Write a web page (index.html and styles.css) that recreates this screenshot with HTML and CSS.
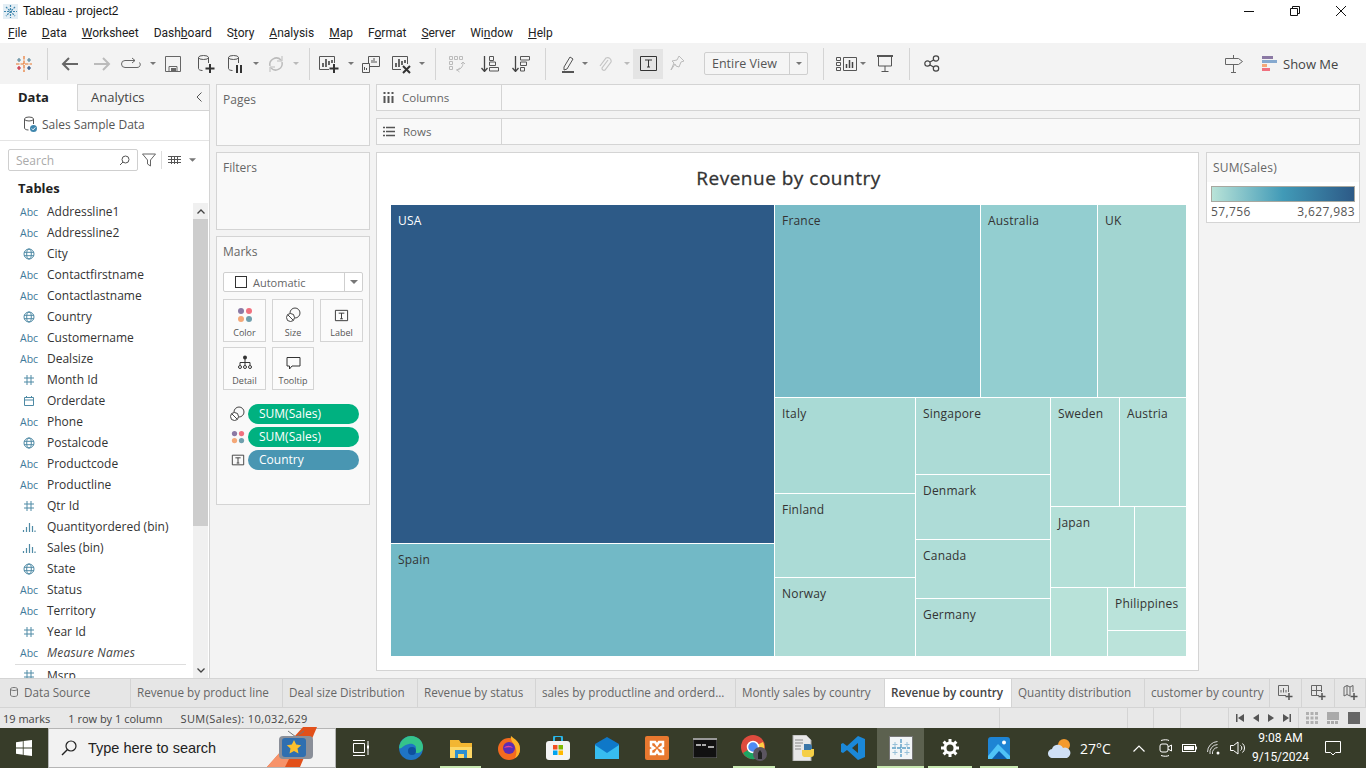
FILE: index.html
```html
<!DOCTYPE html>
<html lang="en">
<head>
  <meta charset="UTF-8" />
  <meta name="viewport" content="width=device-width, initial-scale=1.0" />
  <title>Tableau - project2</title>
  <link rel="stylesheet" href="styles.css">
</head>
<body>

  <svg class="defs" width="0" height="0">
    <symbol id="i-globe" viewBox="0 0 12 12"><g fill="none" stroke="#4f8aa5" stroke-width="1"><circle cx="6" cy="6" r="5"/><ellipse cx="6" cy="6" rx="2.3" ry="5"/><path d="M1 4.3h10M1 7.7h10"/></g></symbol>
    <symbol id="i-hash" viewBox="0 0 12 12"><path d="M4 1v10M8 1v10M1 4h10M1 8h10" fill="none" stroke="#4f8aa5" stroke-width="1"/></symbol>
    <symbol id="i-cal" viewBox="0 0 12 12"><path d="M1.500 2.500h9v8h-9zM1.500 5h9M3.500 1v2M8.500 1v2" fill="none" stroke="#4f8aa5" stroke-width="1"/></symbol>
    <symbol id="i-bin" viewBox="0 0 14 12"><path d="M1.500 9v2M4.500 6v5M7.500 2v9M10.500 5v6M13 9.500v1.500" fill="none" stroke="#4f8aa5" stroke-width="1.200"/></symbol>
    <symbol id="i-size" viewBox="0 0 16 16"><g fill="none" stroke="#444" stroke-width="1"><circle cx="10" cy="6" r="5"/><circle cx="5.500" cy="10.500" r="4" fill="#fff"/><path d="M3 8l5 5"/></g></symbol>
    <symbol id="i-color" viewBox="0 0 16 16"><circle cx="4" cy="4" r="3" fill="#8b79a4"/><circle cx="12" cy="4" r="3" fill="#f0717f"/><circle cx="4" cy="12" r="3" fill="#f4a878"/><circle cx="12" cy="12" r="3" fill="#6f9fad"/></symbol>
    <symbol id="i-label" viewBox="0 0 16 16"><path d="M1.500 2.500h13v11h-13z" fill="none" stroke="#333"/><path d="M5 5.500h6M8 5.500v6M6.500 11.500h3" fill="none" stroke="#333"/></symbol>
    <symbol id="i-caret" viewBox="0 0 8 4"><path d="M0 0h8L4 4z" fill="#777"/></symbol>
  </svg>

  <div class="app">

    <header class="titlebar">
      <svg class="app-icon" width="15" height="15" viewBox="0 0 15 15"><rect width="15" height="15" fill="#e3eef5"/><path d="M7.500 1v13M1 7.500h13M3 3l9 9M12 3l-9 9" stroke="#3f86ad" stroke-width="1.200" stroke-dasharray="2 1"/></svg>
      <span class="app-title">Tableau - project2</span>
      <div class="win-controls">
        <svg width="12" height="12" viewBox="0 0 12 12"><path d="M1 6.500h10" stroke="#111"/></svg>
        <svg width="12" height="12" viewBox="0 0 12 12"><path d="M1.500 3.500h7v7h-7zM3.500 3.500v-2h7v7h-2" fill="none" stroke="#111"/></svg>
        <svg width="12" height="12" viewBox="0 0 12 12"><path d="M1 1l10 10M11 1L1 11" stroke="#111"/></svg>
      </div>
    </header>

    <nav class="menubar">
      <span><u>F</u>ile</span>
      <span><u>D</u>ata</span>
      <span><u>W</u>orksheet</span>
      <span>Dash<u>b</u>oard</span>
      <span>S<u>t</u>ory</span>
      <span><u>A</u>nalysis</span>
      <span><u>M</u>ap</span>
      <span>F<u>o</u>rmat</span>
      <span><u>S</u>erver</span>
      <span>Wi<u>n</u>dow</span>
      <span><u>H</u>elp</span>
    </nav>

    <div class="toolbar">
      <svg width="18" height="18" viewBox="0 0 18 18"><g fill="none" stroke-width="1.200"><path d="M9 1v16M1 9h16" stroke="#e8762d" stroke-dasharray="3.500 1"/><path d="M4 3v4M2 5h4" stroke="#5b879b"/><path d="M14 3v4M12 5h4" stroke="#5b879b"/><path d="M4 11v4M2 13h4" stroke="#c72035"/><path d="M14 11v4M12 13h4" stroke="#1f447a"/></g></svg>
      <span class="sep"></span>
      <svg width="18" height="16" viewBox="0 0 18 16"><path d="M17 8H2M8 2L2 8l6 6" fill="none" stroke="#666" stroke-width="2"/></svg>
      <svg width="18" height="16" viewBox="0 0 18 16"><path d="M1 8h15M10 2l6 6-6 6" fill="none" stroke="#bbb" stroke-width="2"/></svg>
      <svg width="20" height="14" viewBox="0 0 20 14"><path d="M14 3.500H4a3 3 0 0 0 0 7h12a3 3 0 0 0 2.500-5M11 1l3 2.500L11 6" fill="none" stroke="#666"/></svg>
      <svg class="caret" width="6" height="3"><use href="#i-caret"/></svg>
      <svg width="16" height="16" viewBox="0 0 16 16"><path d="M.5.5h15v15H.5zM4 15.500v-5h8v5" fill="none" stroke="#666"/><path d="M6 12h5v3H6z" fill="#666"/></svg>
      <svg width="18" height="20" viewBox="0 0 18 20"><g fill="none" stroke="#555"><ellipse cx="6.500" cy="3.500" rx="5" ry="2"/><path d="M1.500 3.500v11c0 1 1.500 2 4 2M11.500 3.500V9"/></g><path d="M13 10v9M8.500 14.500h9" stroke="#333" stroke-width="2"/></svg>
      <svg width="18" height="20" viewBox="0 0 18 20"><g fill="none" stroke="#555"><ellipse cx="6.500" cy="3.500" rx="5" ry="2"/><path d="M1.500 3.500v11c0 1 1.500 2 4 2M11.500 3.500V9"/></g><path d="M10 11v8M14 11v8" stroke="#333" stroke-width="2"/></svg>
      <svg class="caret" width="6" height="3"><use href="#i-caret"/></svg>
      <svg width="18" height="18" viewBox="0 0 18 18"><path d="M3 11a6.500 6.500 0 0 1 11-6M15 7a6.500 6.500 0 0 1-11 6" fill="none" stroke="#bbb" stroke-width="1.500"/><path d="M15 1v5h-5M3 17v-5h5" fill="none" stroke="#bbb"/></svg>
      <svg class="caret dim" width="6" height="3"><use href="#i-caret"/></svg>
      <span class="sep end"></span>
      <svg width="22" height="20" viewBox="0 0 22 20"><path d="M11 15.500H1.500v-13h15V9" fill="none" stroke="#555"/><path d="M5 9v4M8 5v8M11 7v4M14 6v3" stroke="#444" stroke-width="1.600"/><path d="M16 10v9M11.500 14.500h9" stroke="#333" stroke-width="2"/></svg>
      <svg class="caret" width="6" height="3"><use href="#i-caret"/></svg>
      <svg width="18" height="18" viewBox="0 0 18 18"><g fill="none" stroke="#555"><path d="M6.500 1.500h11v10h-11z"/><path d="M.5 8.500h7v9h-7z" fill="#f3f3f3"/><path d="M10 8V5M12 8V3M14 8V6M2.500 15v-3M4.500 15v-2"/></g></svg>
      <svg width="22" height="20" viewBox="0 0 22 20"><path d="M10 15.500H1.500v-13h15V10" fill="none" stroke="#555"/><path d="M5 9v4M8 5v8M11 7v4M14 6v3" stroke="#444" stroke-width="1.600"/><path d="M12 12l7 7M19 12l-7 7" stroke="#333" stroke-width="2"/></svg>
      <svg class="caret" width="6" height="3"><use href="#i-caret"/></svg>
      <span class="sep end"></span>
      <svg width="18" height="18" viewBox="0 0 18 18"><path d="M1.500 1.500h3v3h-3zM6.500 1.500h3v3h-3zM11.500 1.500h3v3h-3zM1.500 6.500h3v3h-3zM1.500 11.500h3v3h-3zM15 8c0 4-3 7-7 7M12 13l-3 2 2.500 2M13 9l2-2 2 2" fill="none" stroke="#bbb"/></svg>
      <svg width="18" height="16" viewBox="0 0 18 16"><path d="M3.500 0v15M.5 12l3 3.500 3-3.500" fill="none" stroke="#444" stroke-width="1.300"/><path d="M8.500 .5h4v4h-4zM8.500 6h6v3.500h-6zM8.500 11.500h9v3.500h-9z" fill="none" stroke="#555"/></svg>
      <svg width="18" height="16" viewBox="0 0 18 16"><path d="M3.500 0v15M.5 12l3 3.500 3-3.500" fill="none" stroke="#444" stroke-width="1.300"/><path d="M8.500 .5h9v3.500h-9zM8.500 6h6v3.500h-6zM8.500 11.500h4v3.500h-4z" fill="none" stroke="#555"/></svg>
      <span class="sep end"></span>
      <span class="gap"></span>
      <svg width="14" height="19" viewBox="0 0 14 19"><path d="M3 13L9 3l3 2-6 10-3 1z" fill="none" stroke="#555"/><path d="M1 18h12" stroke="#555" stroke-width="2"/></svg>
      <svg class="caret" width="6" height="3"><use href="#i-caret"/></svg>
      <svg width="14" height="18" viewBox="0 0 14 18"><path d="M10 5l-6 8a2 2 0 0 0 3 2l6-8a3.500 3.500 0 0 0-5-4l-6 8" fill="none" stroke="#c4c4c4" stroke-width="1.200"/></svg>
      <svg class="caret dim" width="6" height="3"><use href="#i-caret"/></svg>
      <div class="tool-active">
        <svg width="17" height="15" viewBox="0 0 17 15"><path d="M.5.5h16v14H.5z" fill="none" stroke="#333"/><path d="M5 4h7M8.500 4v7M7 11h3" fill="none" stroke="#333"/></svg>
      </div>
      <svg width="16" height="18" viewBox="0 0 16 18"><path d="M10 1l5 5-3 1-2 5-3-1-1-2-4 6 3-7-2-2 5-1z" fill="none" stroke="#bbb"/></svg>
      <div class="fit-select"><span class="fit-label">Entire View</span><span class="fit-arrow"><svg width="6" height="3"><use href="#i-caret"/></svg></span></div>
      <span class="sep end"></span>
      <svg class="endish" width="21" height="14" viewBox="0 0 21 14"><path d="M.5.5h4v3h-4zM.5 5.500h4v3h-4zM.5 10.500h4v3h-4zM7.500.5h13v13h-13z" fill="none" stroke="#555"/><path d="M10.500 11V7M13.500 11V3M16.500 11V5" stroke="#444" stroke-width="1.500"/></svg>
      <svg class="caret" width="6" height="3"><use href="#i-caret"/></svg>
      <svg width="16" height="17" viewBox="0 0 16 17"><path d="M0 1.500h16M1.500 2v9h13V2M8 11v5M4.500 16.500h7" fill="none" stroke="#555"/><path d="M0 1h16" stroke="#555" stroke-width="2"/></svg>
      <span class="sep end"></span>
      <svg width="16" height="17" viewBox="0 0 16 17"><g fill="none" stroke="#444" stroke-width="1.200"><circle cx="3.500" cy="8.500" r="2.700"/><circle cx="12" cy="3.500" r="2.700"/><circle cx="12" cy="13.500" r="2.700"/><path d="M6 7l3.500-2M6 10l3.500 2"/></g></svg>
      <span class="gap"></span>
      <svg width="18" height="18" viewBox="0 0 18 18"><path d="M.5 3.500h13l4 3-4 3H.5zM8.500 0v3M8.500 10v7M6 17.500h5" fill="none" stroke="#666"/></svg>
      <div class="show-me">
        <svg width="15" height="16" viewBox="0 0 15 16"><rect width="11" height="3" fill="#8b79a4"/><rect y="4" width="15" height="3" fill="#86a9cf"/><rect y="8" width="5" height="3" fill="#f4a878"/><rect y="12" width="8" height="3" fill="#f0717f"/></svg>
        <span>Show Me</span>
      </div>
    </div>

    <main class="workspace">

      <aside class="data-pane">
        <div class="pane-tabs">
          <span class="pane-tab active">Data</span>
          <span class="pane-tab">Analytics</span>
          <svg class="collapse" width="6" height="10" viewBox="0 0 6 10"><path d="M5.500.5L1 5l4.500 4.500" fill="none" stroke="#555"/></svg>
        </div>
        <div class="source">
          <svg width="15" height="17" viewBox="0 0 15 17"><g fill="none" stroke="#555"><ellipse cx="6" cy="3" rx="4.500" ry="2"/><path d="M1.500 3v9c0 1 1.500 2 4 2M10.500 3v5"/></g><circle cx="10.500" cy="12.500" r="3.500" fill="#3f86ad"/><path d="M8.800 12.500l1.300 1.300 2.200-2.400" fill="none" stroke="#fff"/></svg>
          <span>Sales Sample Data</span>
        </div>
        <div class="search-row">
          <div class="search-box">
            <span>Search</span>
            <svg width="11" height="11" viewBox="0 0 11 11"><circle cx="6.500" cy="4.500" r="3.500" fill="none" stroke="#555"/><path d="M4 7l-3 3" stroke="#555"/></svg>
          </div>
          <svg width="14" height="14" viewBox="0 0 14 14"><path d="M.5 1h13L8.500 7v6l-3-2V7z" fill="none" stroke="#666"/></svg>
          <span class="search-sep"></span>
          <svg width="13" height="9" viewBox="0 0 13 9"><path d="M0 .5h13M0 3.500h13M0 6.500h13M3.500 0v8M6.500 0v8M9.500 0v8" stroke="#555" fill="none"/></svg>
          <svg class="search-caret" width="7" height="4"><use href="#i-caret"/></svg>
        </div>
        <h2 class="tables-title">Tables</h2>
        <div class="field-area">
          <ul class="field-list">
            <li><span class="abc">Abc</span>Addressline1</li>
            <li><span class="abc">Abc</span>Addressline2</li>
            <li><svg class="fi"><use href="#i-globe"/></svg>City</li>
            <li><span class="abc">Abc</span>Contactfirstname</li>
            <li><span class="abc">Abc</span>Contactlastname</li>
            <li><svg class="fi"><use href="#i-globe"/></svg>Country</li>
            <li><span class="abc">Abc</span>Customername</li>
            <li><span class="abc">Abc</span>Dealsize</li>
            <li><svg class="fi"><use href="#i-hash"/></svg>Month Id</li>
            <li><svg class="fi"><use href="#i-cal"/></svg>Orderdate</li>
            <li><span class="abc">Abc</span>Phone</li>
            <li><svg class="fi"><use href="#i-globe"/></svg>Postalcode</li>
            <li><span class="abc">Abc</span>Productcode</li>
            <li><span class="abc">Abc</span>Productline</li>
            <li><svg class="fi"><use href="#i-hash"/></svg>Qtr Id</li>
            <li><svg class="fi"><use href="#i-bin"/></svg>Quantityordered (bin)</li>
            <li><svg class="fi"><use href="#i-bin"/></svg>Sales (bin)</li>
            <li><svg class="fi"><use href="#i-globe"/></svg>State</li>
            <li><span class="abc">Abc</span>Status</li>
            <li><span class="abc">Abc</span>Territory</li>
            <li><svg class="fi"><use href="#i-hash"/></svg>Year Id</li>
            <li class="measure-names"><span class="abc">Abc</span><em>Measure Names</em></li>
            <li class="measure"><svg class="fi"><use href="#i-hash"/></svg>Msrp</li>
          </ul>
          <div class="scrollbar">
            <span class="scroll-btn"><svg width="8" height="5" viewBox="0 0 8 5"><path d="M.5 4.500L4 1l3.500 3.500" fill="none" stroke="#444" stroke-width="1.300"/></svg></span>
            <span class="scroll-thumb"></span>
            <span class="scroll-btn down"><svg width="8" height="5" viewBox="0 0 8 5"><path d="M.5.5L4 4 7.500.5" fill="none" stroke="#444" stroke-width="1.300"/></svg></span>
          </div>
        </div>
      </aside>

      <section class="shelves">
        <div class="card pages-card"><div class="card-title">Pages</div></div>
        <div class="card filters-card"><div class="card-title">Filters</div></div>
        <div class="card marks-card">
          <div class="card-title">Marks</div>
          <div class="mark-select">
            <span class="mark-square"></span>
            <span class="mark-type">Automatic</span>
            <span class="mark-arrow"><svg width="8" height="4"><use href="#i-caret"/></svg></span>
          </div>
          <div class="mark-buttons">
            <div class="mark-btn"><svg width="16" height="16"><use href="#i-color"/></svg><span>Color</span></div>
            <div class="mark-btn"><svg width="16" height="16"><use href="#i-size"/></svg><span>Size</span></div>
            <div class="mark-btn"><svg width="15" height="15"><use href="#i-label"/></svg><span>Label</span></div>
            <div class="mark-btn"><svg width="14" height="16" viewBox="0 0 14 16"><circle cx="7" cy="2.500" r="2" fill="#333"/><path d="M7 4v6M2 10V7.500h10V10" fill="none" stroke="#333"/><circle cx="2" cy="12" r="1.500" fill="none" stroke="#333"/><circle cx="7" cy="12" r="1.500" fill="none" stroke="#333"/><circle cx="12" cy="12" r="1.500" fill="none" stroke="#333"/></svg><span>Detail</span></div>
            <div class="mark-btn"><svg width="15" height="15" viewBox="0 0 15 15"><path d="M1 1.500h13v8.500H6l-2.500 3v-3H1z" fill="none" stroke="#333"/></svg><span>Tooltip</span></div>
          </div>
          <div class="pill-row"><svg width="16" height="16"><use href="#i-size"/></svg><span class="pill measure-pill">SUM(Sales)</span></div>
          <div class="pill-row"><svg width="14" height="14"><use href="#i-color"/></svg><span class="pill measure-pill">SUM(Sales)</span></div>
          <div class="pill-row"><svg width="14" height="14"><use href="#i-label"/></svg><span class="pill dim-pill">Country</span></div>
        </div>
      </section>

      <section class="canvas-col">
        <div class="shelf">
          <div class="shelf-label">
            <svg width="11" height="11" viewBox="0 0 11 11"><path d="M1.500 4v7M5.500 4v7M9.500 4v7" stroke="#555" stroke-width="2"/><path d="M.5 1h2M4.500 1h2M8.500 1h2" stroke="#555" stroke-width="2"/></svg>
            <span>Columns</span>
          </div>
        </div>
        <div class="shelf">
          <div class="shelf-label">
            <svg width="12" height="11" viewBox="0 0 12 11"><path d="M3 1.500h9M3 5.500h9M3 9.500h9M0 1.500h2M0 5.500h2M0 9.500h2" stroke="#555" stroke-width="1.500"/></svg>
            <span>Rows</span>
          </div>
        </div>
        <div class="canvas-row">
          <div class="view">
            <h1 class="view-title">Revenue by country</h1>
            <div class="treemap">
              <div class="tm-col" style="width:383px">
                <div class="tm-cell light" style="height:338px;background:#2d5a87">USA</div>
                <div class="tm-cell" style="height:112px;background:#72b9c6">Spain</div>
              </div>
              <div class="tm-col" style="width:411px">
                <div class="tm-row" style="height:192px">
                  <div class="tm-cell" style="width:205px;background:#78bbc7">France</div>
                  <div class="tm-cell" style="width:116px;background:#93ced0">Australia</div>
                  <div class="tm-cell" style="width:88px;background:#a2d5d1">UK</div>
                </div>
                <div class="tm-row" style="height:258px">
                  <div class="tm-col" style="width:140px">
                    <div class="tm-cell" style="height:95px;background:#a9dad5">Italy</div>
                    <div class="tm-cell" style="height:83px;background:#abdbd6">Finland</div>
                    <div class="tm-cell" style="height:78px;background:#aedcd6">Norway</div>
                  </div>
                  <div class="tm-col" style="width:134px">
                    <div class="tm-cell" style="height:76px;background:#acdbd6">Singapore</div>
                    <div class="tm-cell" style="height:64px;background:#aedcd7">Denmark</div>
                    <div class="tm-cell" style="height:58px;background:#afddd7">Canada</div>
                    <div class="tm-cell" style="height:57px;background:#b0ddd7">Germany</div>
                  </div>
                  <div class="tm-col" style="width:135px">
                    <div class="tm-row" style="height:108px">
                      <div class="tm-cell" style="width:68px;background:#b1ded8">Sweden</div>
                      <div class="tm-cell" style="width:66px;background:#b2dfd8">Austria</div>
                    </div>
                    <div class="tm-row" style="height:80px">
                      <div class="tm-cell" style="width:83px;background:#b4e0d8">Japan</div>
                      <div class="tm-cell" style="width:51px;background:#b7e1d9"></div>
                    </div>
                    <div class="tm-row" style="height:68px">
                      <div class="tm-cell" style="width:56px;background:#b8e2d9"></div>
                      <div class="tm-col" style="width:78px">
                        <div class="tm-cell" style="height:42px;background:#bae3da">Philippines</div>
                        <div class="tm-cell" style="height:25px;background:#bbe3da"></div>
                      </div>
                    </div>
                  </div>
                </div>
              </div>
            </div>
          </div>
          <div class="legend">
            <div class="legend-title">SUM(Sales)</div>
            <div class="legend-body">
              <div class="legend-ramp"></div>
              <div class="legend-range"><span>57,756</span><span>3,627,983</span></div>
            </div>
          </div>
        </div>
      </section>
    </main>

    <div class="sheet-tabs">
      <div class="sheet-tab first"><svg width="8" height="10" viewBox="0 0 8 10"><path d="M.5 2c0-2 7-2 7 0v6c0 2-7 2-7 0zM.5 2c0 2 7 2 7 0" fill="none" stroke="#777"/></svg>Data Source</div>
      <div class="sheet-tab">Revenue by product line</div>
      <div class="sheet-tab">Deal size Distribution</div>
      <div class="sheet-tab">Revenue by status</div>
      <div class="sheet-tab">sales by productline and orderd...</div>
      <div class="sheet-tab">Montly sales by country</div>
      <div class="sheet-tab current">Revenue by country</div>
      <div class="sheet-tab">Quantity distribution</div>
      <div class="sheet-tab">customer by country</div>
      <div class="sheet-tab add"><svg width="15" height="15" viewBox="0 0 15 15"><path d="M8 10.500H.5v-10h10V7" fill="none" stroke="#666"/><path d="M3 7.500V5M5.500 7.500V3M8 7.500V5" stroke="#666"/><path d="M11 8v7M7.500 11.500h7" stroke="#555" stroke-width="1.500"/></svg></div>
      <div class="sheet-tab add"><svg width="15" height="15" viewBox="0 0 15 15"><path d="M8 10.500H.5v-10h10V7M.5 5.500h10M5.500.5v10" fill="none" stroke="#666"/><path d="M11 8v7M7.500 11.500h7" stroke="#555" stroke-width="1.500"/></svg></div>
      <div class="sheet-tab add"><svg width="15" height="15" viewBox="0 0 15 15"><path d="M7 11L4 9.500l-3 1.500V2l3-1.500L7 2l3-1.500V7M4 .5v9M7 2v9" fill="none" stroke="#666"/><path d="M11 8v7M7.500 11.500h7" stroke="#555" stroke-width="1.500"/></svg></div>
    </div>

    <footer class="statusbar">
      <div class="status-info"><span>19 marks</span><span>1 row by 1 column</span><span class="status-sum">SUM(Sales): 10,032,629</span></div>
      <div class="status-cell"></div>
      <div class="status-cell"></div>
      <div class="status-cell"></div>
      <div class="status-cell"></div>
      <div class="status-cell pager">
        <svg width="8" height="8" viewBox="0 0 8 8"><path d="M0 0h1.500v8H0zM8 0v8L2 4z" fill="#555"/></svg>
        <svg width="6" height="8" viewBox="0 0 6 8"><path d="M6 0v8L0 4z" fill="#555"/></svg>
        <svg width="6" height="8" viewBox="0 0 6 8"><path d="M0 0v8l6-4z" fill="#555"/></svg>
        <svg width="8" height="8" viewBox="0 0 8 8"><path d="M8 0H6.500v8H8zM0 0v8l6-4z" fill="#555"/></svg>
      </div>
      <div class="status-cell views">
        <svg width="12" height="12" viewBox="0 0 12 12"><path d="M1.500 0v12M6 0v12M10.500 0v12" stroke="#b0b0b0" stroke-width="3" stroke-dasharray="3 1.500"/></svg>
        <svg width="12" height="12" viewBox="0 0 12 12"><rect width="12" height="8" fill="#aaa"/><path d="M0 10.500h12" stroke="#aaa" stroke-width="3" stroke-dasharray="3 1"/></svg>
        <svg width="12" height="12" viewBox="0 0 12 12"><rect width="12" height="12" fill="#666"/></svg>
      </div>
    </footer>

    <div class="taskbar">
      <div class="tb-item"><svg width="16" height="16" viewBox="0 0 16 16"><path d="M0 2.200L6.800 1.200V7.600H0zM7.600 1.100L16 0v7.600H7.600zM0 8.400h6.800v6.400L0 13.800zM7.600 8.400H16V16l-8.400-1.100z" fill="#fff"/></svg></div>
      <div class="task-search">
        <svg width="16" height="16" viewBox="0 0 16 16"><circle cx="10" cy="6" r="5" fill="none" stroke="#222" stroke-width="1.200"/><path d="M6.500 9.500L1 15" stroke="#222" stroke-width="1.400"/></svg>
        <span>Type here to search</span>
        <svg class="search-promo" width="68" height="40" viewBox="0 0 68 40"><path d="M17 40L53 0h14L50 40z" fill="#e2501a"/><path d="M17 40l14-16h12l-8 16z" fill="#f7936a"/><path d="M38 4l8 6M54 4l-8 6" stroke="#777"/><rect x="29" y="9" width="34" height="23" rx="4" fill="#8a8f99"/><rect x="32" y="11" width="24" height="19" rx="3" fill="#2f6fb0"/><path d="M44 13l2.200 4.600 5 .6-3.700 3.400 1 5-4.500-2.500-4.500 2.500 1-5-3.700-3.400 5-.6z" fill="#fbc02d"/></svg>
      </div>
      <div class="tb-item"><svg width="16" height="16" viewBox="0 0 16 16"><path d="M.5 3.500h11v9H.5zM0 .5h12M0 15.500h12M15 1v14" fill="none" stroke="#fff"/><path d="M14 5.500h2v3h-2z" fill="#fff"/></svg></div>
      <div class="tb-item"><svg width="24" height="24" viewBox="0 0 24 24"><circle cx="12" cy="12" r="12" fill="#1f74c4"/><path d="M0 12C1 3 8 0 12 0c7 0 12 5 12 11 0 4-3 6-6 6-3 0-4-1-4-2 1 0 3-1 3-3 0-3-4-5-7-4-6 1-8 6-10 4z" fill="#35c38a"/><circle cx="13" cy="15" r="4" fill="#0e4f9e"/></svg></div>
      <div class="tb-item running"><svg width="22" height="19" viewBox="0 0 22 19"><path d="M0 1h9l2 3h11v15H0z" fill="#f2b632"/><path d="M0 8h22v11H0z" fill="#fcd766"/><path d="M5 11h12v8H5z" fill="#2c8fd0"/><path d="M8 15h6v4H8z" fill="#fcd766"/></svg></div>
      <div class="tb-item"><svg width="24" height="24" viewBox="0 0 24 24"><circle cx="12" cy="13" r="11" fill="#f36a1f"/><path d="M14 0c3 3 9 5 9 13 0 4-2 8-5 9 2-4 2-9-1-13-1-3-4-5-3-9z" fill="#fdb128"/><circle cx="12" cy="12" r="6" fill="#5c2db4"/><path d="M7 12c2-3 7-3 9 0-2-1-6-1-9 0z" fill="#e34298"/></svg></div>
      <div class="tb-item"><svg width="24" height="24" viewBox="0 0 24 24"><path d="M8 6V2a2 2 0 0 1 2-2h4a2 2 0 0 1 2 2v4" fill="none" stroke="#29b6e8" stroke-width="2"/><rect y="5" width="24" height="19" rx="3" fill="#f4f4f4"/><rect x="7" y="9" width="4.500" height="4.500" fill="#f25022"/><rect x="12.500" y="9" width="4.500" height="4.500" fill="#7fba00"/><rect x="7" y="14.500" width="4.500" height="4.500" fill="#00a4ef"/><rect x="12.500" y="14.500" width="4.500" height="4.500" fill="#ffb900"/></svg></div>
      <div class="tb-item"><svg width="24" height="22" viewBox="0 0 24 22"><path d="M12 0l12 7v15H0V7z" fill="#0f78c8"/><path d="M0 8l12 8 12-8v14H0z" fill="#37bdf0"/></svg></div>
      <div class="tb-item"><svg width="24" height="24" viewBox="0 0 24 24"><rect width="24" height="24" rx="2" fill="#e8782f"/><path d="M6 6h4l2 3 2-3h4v4l-3 2 3 2v4h-4l-2-3-2 3H6v-4l3-2-3-2z" fill="none" stroke="#fff" stroke-width="2.500"/></svg></div>
      <div class="tb-item"><svg width="24" height="20" viewBox="0 0 24 20"><rect width="24" height="20" fill="#111" stroke="#777"/><path d="M0 1h24" stroke="#999" stroke-width="2"/><path d="M3 7h5M9 7h4M15 9h6" stroke="#ddd" stroke-width="1.300"/></svg></div>
      <div class="tb-item running"><svg width="26" height="26" viewBox="0 0 26 26"><circle cx="12" cy="12" r="12" fill="#dd4b3e"/><path d="M12 12L2 18a12 12 0 0 0 12 6z" fill="#1ea362"/><path d="M12 12l10-5a12 12 0 0 1-8 17z" fill="#ffce44"/><circle cx="12" cy="12" r="5.500" fill="#4c8bf5" stroke="#fff" stroke-width="1.500"/><circle cx="19" cy="19" r="7" fill="#5b5560"/><path d="M17 24v-6l2-3 2 3v6z" fill="#222"/></svg></div>
      <div class="tb-item"><svg width="24" height="26" viewBox="0 0 24 26"><path d="M1 0h13l5 5v21H1z" fill="#e8e8e8" stroke="#aaa"/><path d="M3 5h8M3 8h8M3 11h6M3 14h6" stroke="#888"/><path d="M12 9h5a3 3 0 0 1 3 3v3h-8z" fill="#3a76a8"/><path d="M10 15h9v-1h3v5a3 3 0 0 1-3 3h-7a3 3 0 0 1-2-3z" fill="#f5cf47"/></svg></div>
      <div class="tb-item"><svg width="24" height="24" viewBox="0 0 24 24"><path d="M17 0l7 3v18l-7 3L6 14l-4 3-2-1V8l2-1 4 3zM17 7l-6 5 6 5z" fill="#1b88d8"/></svg></div>
      <div class="tb-item active running"><svg width="24" height="24" viewBox="0 0 24 24"><rect x=".5" y=".5" width="23" height="23" fill="#f2f5f7" stroke="#777"/><g stroke="#5b9ec6"><path d="M12 3v18M3 12h18" stroke-width="1.400" stroke-dasharray="4 1"/><path d="M6 6v5M3.500 8.500h5M18 6v5M15.500 8.500h5M6 14v5M3.500 16.500h5M18 14v5M15.500 16.500h5" opacity=".6"/></g></svg></div>
      <div class="tb-item running"><svg width="18" height="18" viewBox="0 0 18 18"><circle cx="9" cy="9" r="5" fill="none" stroke="#fff" stroke-width="3"/><path d="M9 0v4M9 14v4M0 9h4M14 9h4M2.600 2.600l2.800 2.800M12.600 12.600l2.800 2.800M15.400 2.600l-2.800 2.800M5.400 12.600l-2.800 2.800" stroke="#fff" stroke-width="3"/></svg></div>
      <div class="tb-item running"><svg width="22" height="22" viewBox="0 0 22 22"><rect width="22" height="22" rx="3" fill="#1e84d4"/><circle cx="16" cy="5.500" r="2" fill="#fff"/><path d="M0 19L10 7l12 12v3H0z" fill="#4fc3f7"/><path d="M4 22l7-8 8 8z" fill="#0d5fb0"/></svg></div>
      <div class="weather">
        <svg width="24" height="20" viewBox="0 0 24 20"><circle cx="16" cy="7" r="6" fill="#f39a2e"/><path d="M5 20a4.500 4.500 0 0 1-1-9 6 6 0 0 1 11-1 5 5 0 0 1 4 10z" fill="#cfe0f5"/></svg>
        <span>27°C</span>
      </div>
      <div class="tb-item"><svg width="12" height="7" viewBox="0 0 12 7"><path d="M.5 6.500L6 1l5.500 5.500" fill="none" stroke="#fff" stroke-width="1.200"/></svg></div>
      <div class="tb-item"><svg width="13" height="18" viewBox="0 0 13 18"><path d="M2 1.500c3-1 6-1 8 0M2 16.500c3 1 6 1 8 0" fill="none" stroke="#fff"/><rect x="1" y="5" width="8" height="8" rx="2" fill="none" stroke="#fff"/><path d="M9 8l3.500-2v6L9 10" fill="none" stroke="#fff"/></svg></div>
      <div class="tb-item"><svg width="15" height="8" viewBox="0 0 15 8"><rect x=".5" y=".5" width="13" height="7" fill="none" stroke="#fff"/><rect x="2" y="2" width="10" height="4" fill="#fff"/><path d="M14 2.500h1v3h-1z" fill="#fff"/></svg></div>
      <div class="tb-item"><svg width="14" height="14" viewBox="0 0 14 14"><g fill="none" stroke="#ddd"><path d="M.5 11a10.500 10.500 0 0 1 10-10.500M3 13a8 8 0 0 1 7.500-9.500M5.500 13a5.500 5.500 0 0 1 5-6.500"/></g><circle cx="11" cy="12" r="1.500" fill="#fff"/></svg></div>
      <div class="tb-item"><svg width="16" height="14" viewBox="0 0 16 14"><path d="M.5 4.500h3L8 1v12L3.500 9.500h-3zM10.500 4.500a3 3 0 0 1 0 5M12.500 2.500a6 6 0 0 1 0 9" fill="none" stroke="#fff"/></svg></div>
      <div class="clock"><span>9:08 AM</span><span>9/15/2024</span></div>
      <div class="tb-item"><svg width="16" height="15" viewBox="0 0 16 15"><path d="M.5.5h15v11h-5L8 14l-2.500-2.500h-5z" fill="none" stroke="#fff"/></svg></div>
    </div>

  </div>
</body>
</html>
```

FILE: styles.css
```css
* {
  margin: 0;
  padding: 0;
  box-sizing: border-box;
}

html, body {
  width: 1366px;
  height: 768px;
  overflow: hidden;
}

body {
  font-family: "Open Sans", "Noto Sans", sans-serif;
  font-size: 12px;
  color: #333;
  background: #fff;
}

.defs {
  position: absolute;
}

.app {
  display: flex;
  flex-direction: column;
  height: 768px;
}

/* title and menu */
.titlebar {
  display: flex;
  align-items: center;
  flex: none;
  height: 22px;
  padding-left: 3px;
  background: #fff;
  font-family: "Liberation Sans", sans-serif;
}

.app-title {
  margin-left: 5px;
  font-size: 12px;
  color: #111;
}

.win-controls {
  display: flex;
  gap: 34px;
  margin-left: auto;
  padding-right: 19px;
}

.menubar {
  display: flex;
  align-items: center;
  flex: none;
  gap: 15px;
  height: 21px;
  padding-left: 8px;
  background: #fff;
  font-family: Roboto, "Liberation Sans", sans-serif;
  font-size: 12px;
  color: #222;
}

/* main toolbar, one grid track per tool */
.toolbar {
  display: grid;
  grid-template-columns:
    47px 1px 44px 20px 38px 6px 34px 32px 28px 12px 28px 12px 8px
    38px 6px 34px 28px 12px 8px 42px 24px 38px 6px 10px
    24px 10px 30px 13px 30px 28px 117px 16px
    33px 12px 32px 9px 44px 1fr 28px 118px;
  align-items: center;
  justify-items: center;
  flex: none;
  height: 41px;
  background: #f3f3f3;
}

.sep {
  width: 1px;
  height: 32px;
  background: #d4d4d4;
}

.sep.end {
  justify-self: end;
}

.endish {
  justify-self: end;
}

.dim {
  opacity: 0.45;
}

.tool-active {
  display: flex;
  align-items: center;
  justify-content: center;
  width: 30px;
  height: 30px;
  background: #e4e4e4;
}

.fit-select {
  justify-self: end;
  display: flex;
  align-items: center;
  width: 104px;
  height: 23px;
  border: 1px solid #cfcfcf;
  border-radius: 2px;
  background: #f5f5f5;
  font-size: 12.500px;
  color: #555;
}

.fit-label {
  flex: 1;
  padding-left: 7px;
}

.fit-arrow {
  display: flex;
  align-items: center;
  justify-content: center;
  width: 18px;
  height: 100%;
  border-left: 1px solid #cfcfcf;
}

.show-me {
  justify-self: start;
  display: flex;
  align-items: center;
  gap: 6px;
  padding-left: 14px;
  font-size: 13px;
  color: #444;
}

/* workspace */
.workspace {
  flex: none;
  height: 594px;
  display: grid;
  grid-template-columns: 210px 154px 1fr;
  grid-template-rows: 594px;
  column-gap: 6px;
  padding-right: 6px;
  background: #f3f3f3;
}

.data-pane {
  display: flex;
  flex-direction: column;
  background: #fff;
  border-right: 1px solid #d4d4d4;
  min-height: 0;
}

.pane-tabs {
  position: relative;
  display: flex;
  height: 27px;
}

.pane-tab {
  display: flex;
  align-items: center;
  padding-bottom: 2px;
  font-size: 13px;
  color: #444;
}

.pane-tab.active {
  width: 77px;
  padding-left: 18px;
  font-weight: 700;
  color: #222;
}

.pane-tab:not(.active) {
  flex: 1;
  padding-left: 13px;
  background: #f5f5f5;
  border-left: 1px solid #d4d4d4;
  border-top: 1px solid #d4d4d4;
  border-bottom: 1px solid #d4d4d4;
}

.collapse {
  position: absolute;
  right: 7px;
  top: 8px;
}

.source {
  display: flex;
  align-items: center;
  gap: 4px;
  height: 30px;
  padding: 0 0 2px 23px;
  border-bottom: 1px solid #e4e4e4;
  color: #555;
}

.search-row {
  display: flex;
  align-items: center;
  height: 20px;
  margin-top: 9px;
  padding-left: 8px;
}

.search-box {
  display: flex;
  align-items: center;
  justify-content: space-between;
  width: 130px;
  height: 22px;
  padding: 0 7px;
  border: 1px solid #cfcfcf;
  border-radius: 2px;
  color: #aaa;
}

.search-row > svg:first-of-type {
  margin-left: 4px;
}

.search-sep {
  width: 1px;
  height: 18px;
  margin: 0 6px 0 5px;
  background: #ddd;
}

.search-caret {
  margin-left: 8px;
}

.tables-title {
  margin: 9px 0 0 18px;
  font-size: 13px;
  font-weight: 700;
  line-height: 18px;
  color: #222;
}

.field-area {
  flex: 1;
  display: flex;
  justify-content: space-between;
  min-height: 0;
  margin-top: 4px;
  overflow: hidden;
}

.field-list {
  flex: 1;
  min-width: 0;
  list-style: none;
  overflow: hidden;
}

.field-list li {
  display: flex;
  align-items: center;
  height: 21px;
  padding-left: 20px;
  white-space: nowrap;
}

.abc {
  width: 27px;
  font-size: 10.500px;
  color: #3f7a9a;
  flex: none;
}

.fi {
  width: 14px;
  height: 12px;
  margin: 0 11px 0 2px;
  flex: none;
}

.measure-names {
  color: #444;
  letter-spacing: 0.200px;
}

.measure-names .abc {
  letter-spacing: 0;
}

.measure {
  margin: 1px 7px 0 15px;
  border-top: 1px solid #ddd;
  padding-left: 5px !important;
}

.scrollbar {
  display: flex;
  flex-direction: column;
  flex: none;
  width: 15px;
  margin: 2px 1px 0 0;
  background: #f0f0f0;
}

.scroll-btn {
  display: flex;
  align-items: center;
  justify-content: center;
  flex: none;
  height: 16px;
}

.scroll-thumb {
  flex: none;
  height: 307px;
  background: #cdcdcd;
}

.scroll-btn.down {
  margin-top: auto;
}

/* pages, filters, marks */
.shelves {
  display: flex;
  flex-direction: column;
  gap: 6px;
}

.card {
  background: #f9f9f9;
  border: 1px solid #d4d4d4;
  padding: 0 6px;
}

.card-title {
  margin-top: 6px;
  font-size: 12px;
  line-height: 17px;
  color: #666;
}

.pages-card {
  height: 62px;
}

.filters-card {
  height: 78px;
}

.marks-card {
  height: 269px;
}

.mark-select {
  display: flex;
  align-items: center;
  height: 20px;
  margin-top: 12px;
  background: #fff;
  border: 1px solid #cfcfcf;
  border-radius: 2px;
  font-size: 11px;
  color: #666;
}

.mark-square {
  width: 12px;
  height: 12px;
  margin: 0 6px 0 11px;
  border: 1px solid #333;
}

.mark-type {
  flex: 1;
}

.mark-arrow {
  display: flex;
  align-items: center;
  justify-content: center;
  width: 18px;
  height: 100%;
  border-left: 1px solid #cfcfcf;
}

.mark-buttons {
  display: grid;
  grid-template-columns: 43px 42px 43px;
  grid-auto-rows: 43px;
  column-gap: 6px;
  row-gap: 5px;
  margin-top: 7px;
}

.mark-btn {
  display: flex;
  flex-direction: column;
  align-items: center;
  justify-content: flex-end;
  gap: 3px;
  padding-bottom: 2px;
  background: #fbfbfb;
  border: 1px solid #d4d4d4;
  font-size: 9px;
  color: #555;
}

.pill-row {
  display: flex;
  align-items: center;
  justify-content: flex-end;
  gap: 3px;
  margin: 3px 4px 0 0;
}

.mark-buttons + .pill-row {
  margin-top: 14px;
}

.pill {
  width: 111px;
  height: 20px;
  padding-left: 11px;
  border-radius: 10px;
  font-size: 12px;
  line-height: 20px;
  color: #fff;
}

.measure-pill {
  background: #00b180;
}

.dim-pill {
  background: #4996b2;
}

/* columns, rows, canvas */
.canvas-col {
  display: flex;
  flex-direction: column;
  gap: 7px;
  min-width: 0;
}

.shelf {
  display: flex;
  flex: none;
  height: 27px;
  background: #f9f9f9;
  border: 1px solid #d4d4d4;
}

.shelf-label {
  display: flex;
  align-items: center;
  gap: 8px;
  width: 125px;
  padding-left: 6px;
  border-right: 1px solid #d4d4d4;
  font-size: 11.500px;
  color: #666;
}

.canvas-row {
  display: flex;
  gap: 7px;
  align-items: flex-start;
}

.view {
  flex: none;
  width: 823px;
  height: 519px;
  background: #fff;
  border: 1px solid #d4d4d4;
  padding: 0 12px 0 14px;
}

.view-title {
  height: 52px;
  font-size: 19px;
  font-weight: 500;
  letter-spacing: 0.500px;
  line-height: 50px;
  text-align: center;
  color: #333;
  -webkit-text-stroke: 0.300px #333;
}

.treemap {
  display: flex;
  gap: 1px;
  width: 795px;
  height: 451px;
}

.tm-col {
  display: flex;
  flex-direction: column;
  gap: 1px;
  flex: none;
}

.tm-row {
  display: flex;
  gap: 1px;
  flex: none;
}

.tm-cell {
  flex: none;
  padding: 7px 0 0 7px;
  font-size: 12px;
  letter-spacing: 0.200px;
  line-height: 17px;
  color: #333;
}

.tm-cell.light {
  color: #fff;
}

.legend {
  flex: none;
  width: 154px;
  height: 71px;
  border: 1px solid #d4d4d4;
  background: #f9f9f9;
}

.legend-title {
  height: 29px;
  padding-left: 6px;
  letter-spacing: 0.200px;
  line-height: 29px;
  color: #666;
}

.legend-body {
  padding: 4px 4px 0;
  height: 40px;
  background: #fff;
}

.legend-ramp {
  height: 16px;
  background: linear-gradient(90deg, #b9e3d8, #419ab7 50%, #2d5a87);
  border: 1px solid #a8a8a0;
}

.legend-range {
  display: flex;
  justify-content: space-between;
  letter-spacing: 0.400px;
  line-height: 20px;
  color: #555;
}

/* sheet tabs and status */
.sheet-tabs {
  display: grid;
  grid-template-columns: 131px 152px 135px 118px 200px 149px 127px 133px 125px 32px 33px 31px;
  flex: none;
  height: 30px;
  font-size: 11.700px;
  background: #e6e6e6;
  border-top: 1px solid #d4d4d4;
  border-bottom: 1px solid #d4d4d4;
}

.sheet-tab {
  display: flex;
  align-items: center;
  padding: 0 0 2px 6px;
  border-right: 1px solid #d4d4d4;
  color: #666;
  white-space: nowrap;
  overflow: hidden;
}

.sheet-tab.first {
  gap: 6px;
  padding-left: 10px;
}

.sheet-tab.current {
  background: #fff;
  font-weight: 600;
  color: #444;
}

.sheet-tab.add {
  justify-content: center;
  padding-left: 0;
}

.statusbar {
  display: grid;
  grid-template-columns: 999px 128px 26px 27px 48px 70px 68px;
  flex: none;
  height: 20px;
  background: #e8e8e8;
  font-size: 11px;
  color: #444;
}

.status-info {
  display: flex;
  align-items: center;
  gap: 18px;
  padding-left: 3px;
}

.status-sum {
  letter-spacing: 0.400px;
}

.status-cell {
  display: flex;
  align-items: center;
  justify-content: center;
  border-left: 1px solid #d4d4d4;
}

.pager {
  gap: 9px;
}

.views {
  gap: 9px;
}

/* windows taskbar */
.taskbar {
  display: grid;
  grid-template-columns:
    48px 288px 50px 50px 49px 48px 49px 50px 49px 48px 50px 49px 49px 47px 52px 46px
    103px 28px 24px 24px 25px 23px 63px 42px 12px;
  flex: none;
  height: 40px;
  background: #373c29;
  color: #fff;
}

.tb-item {
  position: relative;
  display: flex;
  align-items: center;
  justify-content: center;
}

.tb-item.active {
  background: #5c614f;
}

.tb-item.running::after {
  content: '';
  position: absolute;
  left: 4px;
  right: 4px;
  bottom: 0;
  height: 2px;
  background: #c8e8b0;
}

.tb-item.active.running::after {
  left: 0;
  right: 0;
}

.task-search {
  position: relative;
  display: flex;
  align-items: center;
  gap: 11px;
  padding-left: 12px;
  background: #f2f2f2;
  border: 1px solid #b5b5b5;
  font-family: "Liberation Sans", sans-serif;
  font-size: 14.500px;
  color: #222;
}

.search-promo {
  position: absolute;
  right: 17px;
  bottom: 0;
}

.weather {
  display: flex;
  align-items: center;
  gap: 8px;
  padding-left: 26px;
  font-size: 14px;
}

.clock {
  display: flex;
  flex-direction: column;
  align-items: center;
  justify-content: center;
  font-family: Roboto, sans-serif;
  font-size: 12px;
  line-height: 19px;
}
```
